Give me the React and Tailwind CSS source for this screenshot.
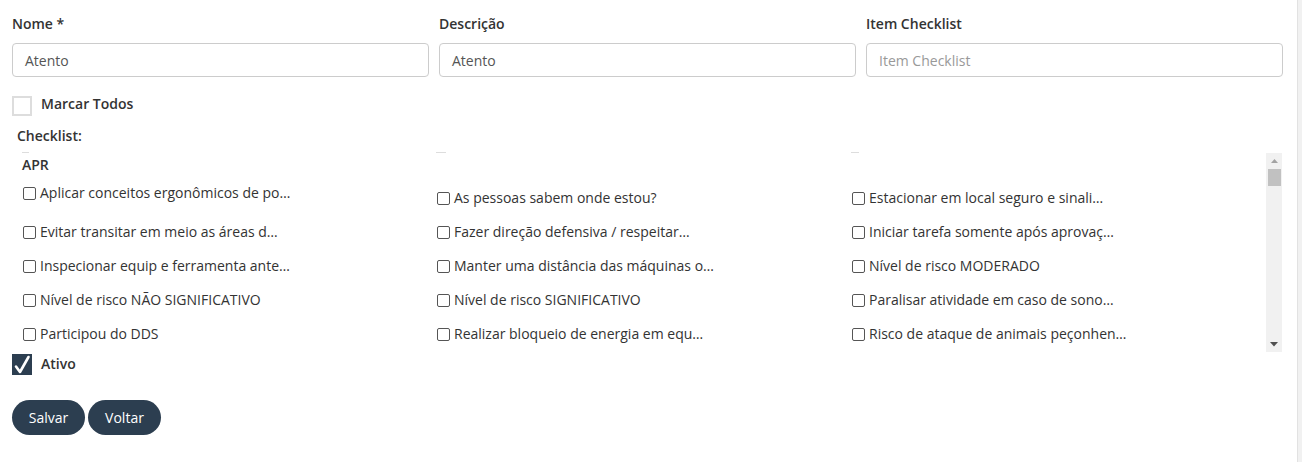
import React from "react";

const col1 = [
    "Aplicar conceitos ergonômicos de po…",
    "Evitar transitar em meio as áreas d…",
    "Inspecionar equip e ferramenta ante…",
    "Nível de risco NÃO SIGNIFICATIVO",
    "Participou do DDS",
];
const col2 = [
    "As pessoas sabem onde estou?",
    "Fazer direção defensiva / respeitar…",
    "Manter uma distância das máquinas o…",
    "Nível de risco SIGNIFICATIVO",
    "Realizar bloqueio de energia em equ…",
];
const col3 = [
    "Estacionar em local seguro e sinali…",
    "Iniciar tarefa somente após aprovaç…",
    "Nível de risco MODERADO",
    "Paralisar atividade em caso de sono…",
    "Risco de ataque de animais peçonhen…",
];

function Item({ text, className = "" }) {
    return (
        <div className={"flex items-center h-[20px] leading-[20px] whitespace-nowrap " + className}>
            <span className="inline-block w-[13px] h-[13px] border border-[#555] rounded-[2px] bg-white mr-[4px] ml-[1px]"></span>
            <span>{text}</span>
        </div>
    );
}

export default function App() {
    return (
        <div className="flex h-[462px] bg-white text-[14px] text-[#333]" style={{ fontFamily: '"Open Sans", "Liberation Sans", sans-serif' }}>
            <div className="w-[1297px] pl-[12px] pr-[14px] pt-[14px]">
                {/* top inputs */}
                <div className="grid grid-cols-3 gap-x-[10px]">
                    {[
                        ["Nome *", "Atento", false],
                        ["Descrição", "Atento", false],
                        ["Item Checklist", "Item Checklist", true],
                    ].map(([label, value, ph]) => (
                        <div key={label}>
                            <div className="font-semibold leading-[20px] mb-[9px]">{label}</div>
                            <div className={"h-[34px] border border-[#ccc] rounded-[4px] px-[12px] flex items-center " + (ph ? "text-[#999]" : "text-[#555]")}>
                                {value}
                            </div>
                        </div>
                    ))}
                </div>

                {/* marcar todos */}
                <div className="flex mt-[19px] h-[20px]">
                    <span className="w-[20px] h-[20px] border-2 border-[#ddd] bg-white"></span>
                    <span className="ml-[9px] font-semibold leading-[16px]">Marcar Todos</span>
                </div>

                <div className="mt-[10px] ml-[5px] leading-[20px] font-semibold">Checklist:</div>

                {/* checklist box */}
                <div className="mt-[4px] flex h-[202px] w-[1270px]">
                    <div className="flex-1 grid grid-cols-[424px_415px_1fr] overflow-hidden">
                        <div className="pl-[10px]">
                            <div className="w-[7px] h-px bg-[#ddd] mt-[2px]"></div>
                            <div className="font-semibold leading-[20px] mt-[2px]">APR</div>
                            <Item text={col1[0]} className="mt-[8px]" />
                            <Item text={col1[1]} className="mt-[19px]" />
                            <Item text={col1[2]} className="mt-[14px]" />
                            <Item text={col1[3]} className="mt-[14px]" />
                            <Item text={col1[4]} className="mt-[14px]" />
                        </div>
                        <div>
                            <div className="w-[10px] h-px bg-[#ddd] mt-[2px]"></div>
                            <div className="flex flex-col gap-[14px] mt-[35px]">
                                {col2.map((t) => <Item key={t} text={t} />)}
                            </div>
                        </div>
                        <div>
                            <div className="w-[8px] h-px bg-[#ddd] mt-[2px]"></div>
                            <div className="flex flex-col gap-[14px] mt-[35px]">
                                {col3.map((t) => <Item key={t} text={t} />)}
                            </div>
                        </div>
                    </div>
                    {/* scrollbar */}
                    <div className="w-[16px] mt-[3px] bg-[#f1f1f1] flex flex-col items-center">
                        <svg width="16" height="15" viewBox="0 0 16 15">
                            <path d="M5 10h7l-3.5-4z" fill="#a3a3a3" />
                        </svg>
                        <div className="w-[13px] h-[17px] bg-[#c1c1c1] mt-[1px]"></div>
                        <div className="flex-1"></div>
                        <svg width="16" height="15" viewBox="0 0 16 15">
                            <path d="M4 5h8l-4 4.5z" fill="#505050" />
                        </svg>
                    </div>
                </div>

                {/* ativo */}
                <div className="flex mt-[2px] h-[21px]">
                    <span className="w-[20px] h-[21px] bg-[#2c3e50] flex items-center justify-center">
                        <svg width="18" height="19" viewBox="0 0 18 19">
                            <path d="M3 11.5 L7 17 L15.5 2" fill="none" stroke="white" strokeWidth="2.6" strokeLinecap="round" strokeLinejoin="round" />
                        </svg>
                    </span>
                    <span className="ml-[9px] font-semibold leading-[19px]">Ativo</span>
                </div>

                {/* buttons */}
                <div className="flex gap-[3px] mt-[25px]">
                    <button className="h-[35px] w-[73px] rounded-full bg-[#2c3e50] text-white">Salvar</button>
                    <button className="h-[35px] w-[73px] rounded-full bg-[#2c3e50] text-white">Voltar</button>
                </div>
            </div>
            <div className="flex-1 bg-[#f1f1f1] border-l border-[#e2e2e2]"></div>
        </div>
    );
}
